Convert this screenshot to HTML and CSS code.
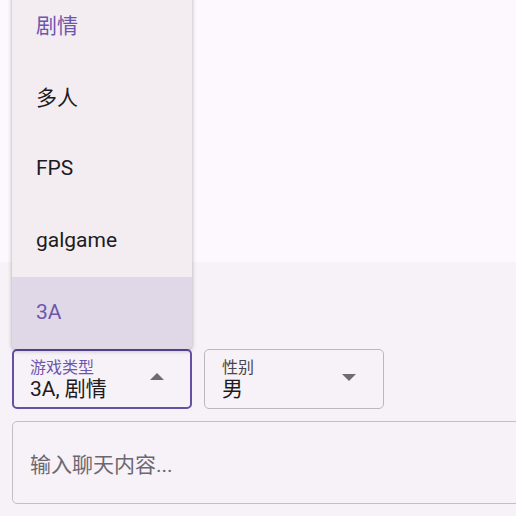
FILE: index.html
```html
<!DOCTYPE html>
<html lang="zh">
<head>
<meta charset="utf-8">
<link rel="stylesheet" href="styles.css">
</head>
<body>
<div class="page">
  <div class="content"></div>
  <div class="panel">
    <div class="selects">
      <div class="select focused">
        <div class="field">
          <span class="label">游戏类型</span>
          <span class="value">3A, 剧情</span>
        </div>
        <span class="arrow up"></span>
        <div class="menu">
          <div class="item selected">剧情</div>
          <div class="item">多人</div>
          <div class="item">FPS</div>
          <div class="item">galgame</div>
          <div class="item selected active">3A</div>
        </div>
      </div>
      <div class="select">
        <div class="field">
          <span class="label">性别</span>
          <span class="value">男</span>
        </div>
        <span class="arrow down"></span>
      </div>
    </div>
    <div class="input">输入聊天内容...</div>
  </div>
</div>
</body>
</html>
```
FILE: styles.css
```css
* { box-sizing: border-box; }
html, body { margin: 0; padding: 0; }
body {
  font-family: Roboto, "Noto Sans CJK SC", sans-serif;
  color: #1d1b20;
  width: 516px;
  height: 516px;
  overflow: hidden;
}
.page { display: flex; flex-direction: column; height: 516px; }
.content { height: 262px; flex-shrink: 0; background: #fdf8fd; }
.panel {
  flex: 1;
  background: #f6f2f7;
  padding: 87px 0 12px 12px;
  display: flex;
  flex-direction: column;
  gap: 12px;
}
.selects { display: flex; gap: 12px; }
.select {
  position: relative;
  width: 180px;
  height: 60px;
  border: 1px solid #bdb6c0;
  border-radius: 5px;
  display: flex;
  align-items: center;
  padding: 0 17px;
}
.select.focused { border: 2px solid #6750a4; padding: 0 16px; }
.field { flex: 1; display: flex; flex-direction: column; padding-top: 1px; }
.label { font-size: 16px; line-height: 18px; color: #49454f; }
.focused .label { color: #6d56ad; }
.value { font-size: 21px; line-height: 24px; color: #1d1b20; }
.arrow { width: 0; height: 0; border-left: 7px solid transparent; border-right: 7px solid transparent; margin-right: 10px; }
.arrow.up { border-bottom: 7px solid #6f6b72; margin-top: -5px; }
.arrow.down { border-top: 7px solid #6f6b72; margin-top: -3px; margin-right: 10px; }
.menu {
  position: absolute;
  left: -2px;
  bottom: 58px;
  width: 180px;
  background: #f3edf2;
  border-radius: 0 0 5px 5px;
  box-shadow: 0 2px 5px rgba(0,0,0,0.22), 0 1px 3px rgba(0,0,0,0.12);
  overflow: hidden;
  z-index: 2;
}
.item {
  height: 72px;
  display: flex;
  align-items: center;
  padding-left: 24px;
  padding-bottom: 2px;
  font-size: 21px;
  color: #1d1b20;
}
.item.selected { color: #6d56ad; }
.item.active { background: #e0d8e6; }
.input {
  height: 83px;
  border: 1px solid #c4bec7;
  border-radius: 5px;
  margin-right: -10px;
  display: flex;
  align-items: center;
  padding-left: 17px;
  font-size: 21px;
  color: #6c6770;
  padding-top: 0;
}
```
